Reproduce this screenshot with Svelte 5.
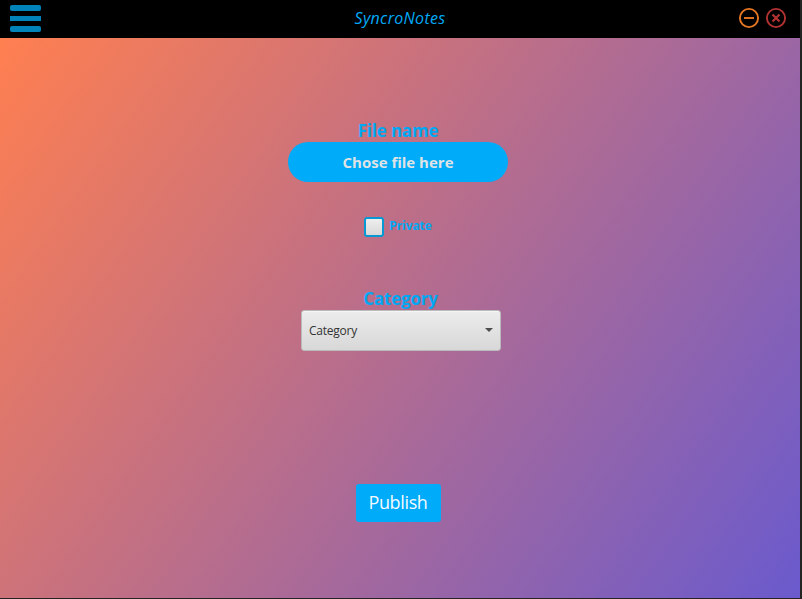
<script>
  let isPrivate = $state(false);
</script>

<div class="window">
  <header>
    <button class="menu" aria-label="Menu"><i></i><i></i><i></i></button>
    <span class="title">SyncroNotes</span>
    <div class="controls">
      <svg width="22" height="22" viewBox="0 0 22 22" fill="none" stroke="#e87722" stroke-width="1.9">
        <circle cx="11" cy="11" r="9.1" /><path d="M6 11h10" />
      </svg>
      <svg width="22" height="22" viewBox="0 0 22 22" fill="none" stroke="#b33232" stroke-width="1.9">
        <circle cx="11" cy="11" r="9.1" /><path d="M7.5 7.5l7 7M14.5 7.5l-7 7" stroke-width="2.2" />
      </svg>
    </div>
  </header>

  <main>
    <div class="label file">File name</div>
    <button class="choose"><span>Chose file here</span></button>
    <label class="private">
      <input type="checkbox" bind:checked={isPrivate} />
      <span>Private</span>
    </label>
    <div class="label category">Category</div>
    <button class="combo">
      <span>Category</span>
      <svg width="8" height="4" viewBox="0 0 8 4"><path d="M0 0h8L4 4z" fill="#4d4d4d" /></svg>
    </button>
    <button class="publish"><span>Publish</span></button>
  </main>
</div>

<style>
  :global(body) { background: #242424; overflow: hidden; }
  * { box-sizing: border-box; }
  button { border: 0; padding: 0; margin: 0; }
  .window {
    width: 800px;
    height: 598px;
    font-family: "Open Sans", "Noto Sans", sans-serif;
    display: flex;
    flex-direction: column;
  }
  header {
    height: 38px;
    background: #000;
    display: grid;
    grid-template-columns: 200px 1fr 200px;
  }
  .menu {
    width: 31px;
    margin: 5px 0 0 10px;
    height: 27px;
    background: none;
    display: flex;
    flex-direction: column;
    justify-content: space-between;
  }
  .menu i { width: 31px; height: 6px; border-radius: 2px; background: #0083b8; }
  .menu i:nth-child(2) { height: 5px; border-radius: 0; }
  .title {
    font: italic 16px/37px "Open Sans", sans-serif;
    color: #00aaf8;
    text-align: center;
    letter-spacing: 0.3px;
  }
  .controls { display: flex; justify-content: flex-end; gap: 5px; padding: 7px 13px 0 0; }
  main {
    height: 560px;
    background: linear-gradient(124.99deg, #ff7f50, #6a5acd);
    display: flex;
    flex-direction: column;
    align-items: center;
    padding-right: 4px;
  }
  .label { font-weight: 700; font-size: 17px; line-height: 26px; height: 24px; color: #00a8f3; white-space: nowrap; letter-spacing: -0.2px; }
  .file { margin-top: 80px; }
  .choose {
    width: 220px;
    height: 40px;
    border-radius: 20px;
    background: #00abf9;
    color: #dfe3e6;
    font: 700 15px/40px "Open Sans", sans-serif;
  }
  .private {
    display: flex;
    align-items: center;
    gap: 5px;
    height: 20px;
    margin-top: 35px;
    color: #00a8f3;
    font-weight: 700;
    font-size: 12px;
    line-height: 18px;
    letter-spacing: -0.1px;
  }
  .private span { padding-bottom: 2px; }
  input {
    appearance: none;
    width: 20px;
    height: 20px;
    margin: -1px 0 0;
    border: 2px solid #0699d3;
    border-radius: 3px;
    background: linear-gradient(#eee, #d9d9d9);
  }
  .category { margin: 49px 0 0 5px; line-height: 25px; }
  .combo {
    width: 200px;
    height: 41px;
    margin: 0 0 0 6px;
    padding: 0 7px;
    display: flex;
    align-items: center;
    justify-content: space-between;
    border: 1px solid #bababa;
    border-radius: 3px;
    background: linear-gradient(#ececec, #d8d8d8);
    box-shadow: inset 0 1px #f5f5f5;
    color: #333;
    font: 12px/38px "Open Sans", sans-serif;
    letter-spacing: -0.25px;
  }
  .combo svg { margin-top: -2px; }
  .publish {
    width: 85px;
    height: 38px;
    margin-top: 133px;
    border-radius: 3px;
    background: #00abf9;
    color: #f4faff;
    font: 18px/36px "Open Sans", sans-serif;
    letter-spacing: -0.35px;
  }
  .publish span { display: block; height: 38px; }
</style>
